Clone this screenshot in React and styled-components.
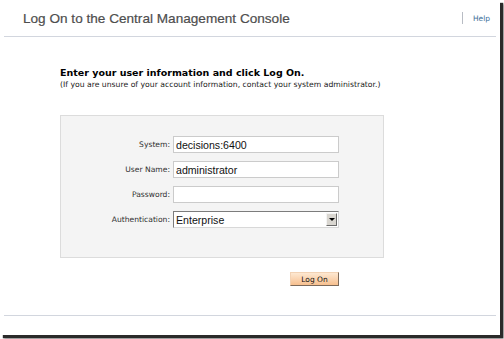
import React from 'react'
import styled, { createGlobalStyle } from 'styled-components'

const GlobalStyle = createGlobalStyle`
  html, body {
    margin: 0;
    padding: 0;
    background: #ffffff;
  }
  body {
    padding: 0 4px 4px 0;
  }
`;

const Frame = styled.div`
  width: 500px;
  height: 335px;
  background: #ffffff;
  box-shadow: 3px 3px 1px #2a2a2a, 4px 4px 2px rgba(0, 0, 0, 0.4);
  display: flex;
  flex-direction: column;
  font-family: "DejaVu Sans", Verdana, sans-serif;
`;

const Header = styled.div`
  display: flex;
  align-items: center;
  height: 36px;
  margin: 0 4px;
  padding: 0 6px 0 19px;
  border-bottom: 1px solid #d2d6de;
`;

const Title = styled.h1`
  flex: 1;
  margin: 0;
  font-family: "Liberation Sans", Arial, sans-serif;
  font-weight: normal;
  font-size: 13.6px;
  color: #4e4e4e;
  -webkit-text-stroke: 0.2px #4e4e4e;
`;

const Divider = styled.span`
  width: 1px;
  height: 12px;
  background: #b8bcc4;
  margin-right: 10px;
`;

const HelpLink = styled.a`
  font-size: 7.5px;
  color: #3b6d98;
  text-decoration: none;
`;

const Content = styled.div`
  flex: 1;
  width: 324px;
  padding: 30px 0 0 60px;
`;

const Lead = styled.p`
  margin: 0;
  font-size: 9.5px;
  font-weight: bold;
  color: #000;
  line-height: 12px;
  white-space: nowrap;
`;

const Note = styled.p`
  margin: 0;
  font-size: 7.7px;
  color: #202020;
  line-height: 11px;
  white-space: nowrap;
`;

const Panel = styled.div`
  margin-top: 25px;
  height: 143px;
  box-sizing: border-box;
  background: #f4f4f4;
  border: 1px solid #dcdcdc;
  padding-top: 20px;
`;

const Form = styled.div`
  display: grid;
  grid-template-columns: 109px 166px;
  column-gap: 3px;
  row-gap: 8px;
  align-items: center;
`;

const Label = styled.label`
  text-align: right;
  font-size: 7.6px;
  color: #303030;
`;

const Field = styled.div`
  height: 17px;
  box-sizing: border-box;
  background: #fff;
  border: 1px solid ${p => (p.$sunken ? '#7c7c7c' : '#cbcbcb')};
  border-right-color: ${p => (p.$sunken ? '#d8d8d8' : '#cbcbcb')};
  border-bottom-color: ${p => (p.$sunken ? '#d8d8d8' : '#cbcbcb')};
  display: flex;
  align-items: center;
  padding-left: 2px;
  font-family: "Liberation Sans", Arial, sans-serif;
  font-size: 10.6px;
  color: #111;
`;

const FieldText = styled.span`
  flex: 1;
`;

const ArrowBox = styled.span`
  width: 11px;
  height: 13px;
  margin-right: 1px;
  background: #d9d6d0;
  border: 1px solid;
  border-color: #f4f4f4 #6b6b6b #6b6b6b #f4f4f4;
  box-sizing: border-box;
  display: flex;
  align-items: center;
  justify-content: center;

  &::after {
    content: '';
    border-left: 3px solid transparent;
    border-right: 3px solid transparent;
    border-top: 3px solid #000;
  }
`;

const Actions = styled.div`
  display: flex;
  justify-content: flex-end;
  padding-right: 45px;
  margin-top: 14px;
`;

const Button = styled.button`
  width: 49px;
  height: 14px;
  padding: 0;
  font-family: "DejaVu Sans", Verdana, sans-serif;
  font-size: 7.5px;
  color: #111;
  background: linear-gradient(#fde8d2, #f7c08f);
  border: 1px solid;
  border-color: #f2d2b4 #7d6a5a #7d6a5a #f2d2b4;
`;

const Footer = styled.div`
  margin: 0 4px 19px;
  border-top: 1px solid #d2d6de;
`;

const rows = [
  { label: 'System:', value: 'decisions:6400' },
  { label: 'User Name:', value: 'administrator' },
  { label: 'Password:', value: '' },
]

export default function App() {
  return (
    <Frame>
      <GlobalStyle />
      <Header>
        <Title>Log On to the Central Management Console</Title>
        <Divider />
        <HelpLink href="#">Help</HelpLink>
      </Header>
      <Content>
        <Lead>Enter your user information and click Log On.</Lead>
        <Note>(If you are unsure of your account information, contact your system administrator.)</Note>
        <Panel>
          <Form>
            {rows.map(r => (
              <React.Fragment key={r.label}>
                <Label>{r.label}</Label>
                <Field><FieldText>{r.value}</FieldText></Field>
              </React.Fragment>
            ))}
            <Label>Authentication:</Label>
            <Field $sunken>
              <FieldText>Enterprise</FieldText>
              <ArrowBox />
            </Field>
          </Form>
        </Panel>
        <Actions>
          <Button>Log On</Button>
        </Actions>
      </Content>
      <Footer />
    </Frame>
  )
}
